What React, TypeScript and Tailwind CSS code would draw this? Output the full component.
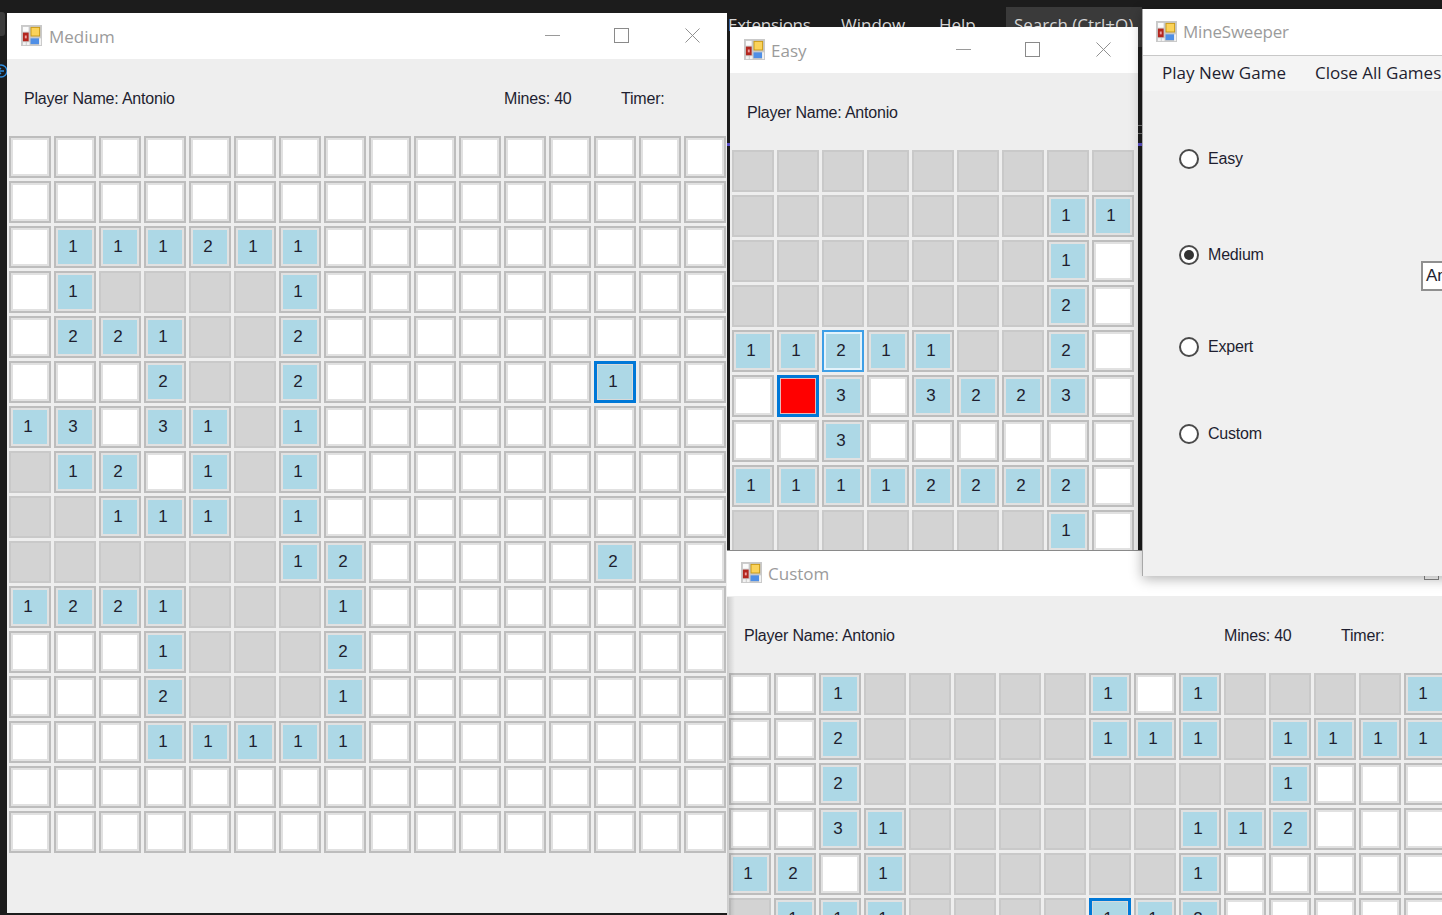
const MEDIUM = [
  "................",
  "................",
  ".111211.........",
  ".1xxxx1.........",
  ".221xx2.........",
  "...2xx2......F..",
  "13.31x1.........",
  "x12.1x1.........",
  "xx111x1.........",
  "xxxxxx12.....2..",
  "1221xxx1........",
  "...1xxx2........",
  "...2xxx1........",
  "...11111........",
  "................",
  "................",
];

const EASY = [
  "xxxxxxxxx",
  "xxxxxxx11",
  "xxxxxxx1.",
  "xxxxxxx2.",
  "11L11xx2.",
  ".R3.3223.",
  "..3......",
  "11112222.",
  "xxxxxxx1.",
];

const CUSTOM = [
  "..1xxxxx1.1xxxx1",
  "..2xxxxx111x1111",
  "..2xxxxxxxxx1...",
  "..31xxxxxx112...",
  "12.1xxxxxx1.....",
  "x111xxxxF12.....",
];

function Cell({ v }: { v: string }) {
  const digit = /[0-9]/.test(v) ? v : v === "F" ? "1" : v === "L" ? "2" : "";
  if (v === "x")
    return <div className="h-[42px] w-[42px] border-2 border-[#c9c9c9] bg-[#d3d3d3]" />;
  if (v === "R")
    return (
      <div className="h-[42px] w-[42px] border-[3px] border-[#0078d7] bg-[#ff0000] shadow-[inset_0_0_0_1px_#e8b8b8]" />
    );
  if (v === ".")
    return (
      <div className="h-[42px] w-[42px] border-2 border-[#bdbdbd] bg-white shadow-[inset_0_0_0_2px_#e1e1e1]" />
    );
  const shell =
    v === "F"
      ? "border-[3px] border-[#0078d7] shadow-[inset_0_0_0_1px_#d9d9d9]"
      : v === "L"
        ? "border-2 border-[#3f9fe6] shadow-[inset_0_0_0_2px_#e4f3fb]"
        : "border-2 border-[#bdbdbd] shadow-[inset_0_0_0_2px_#e1e1e1]";
  return (
    <div
      className={`flex h-[42px] w-[42px] items-center justify-center bg-[#add8e6] pr-[4px] pb-[1px] font-['Liberation_Sans',sans-serif] text-[17px] text-[#1e1e30] ${shell}`}
    >
      {digit}
    </div>
  );
}

function Board({ rows, gridClass }: { rows: string[]; gridClass: string }) {
  return (
    <div className={`grid shrink-0 gap-[3px] pl-[2px] ${gridClass}`}>
      {rows.flatMap((r, i) => r.split("").map((c, j) => <Cell key={`${i}-${j}`} v={c} />))}
    </div>
  );
}

function AppIcon() {
  return (
    <svg width="21" height="21" viewBox="0 0 22 22" className="mb-[1px] shrink-0">
      <rect x="0" y="0" width="22" height="22" fill="#c9c9c9" />
      <rect x="2" y="2" width="6" height="5" fill="#fbfbfb" />
      <rect x="2" y="8" width="6" height="9" fill="#b3261e" />
      <rect x="4" y="11" width="2" height="3" fill="#f0a0a0" />
      <rect x="2" y="18" width="3" height="3" fill="#f2f2f2" />
      <rect x="6" y="18" width="3" height="3" fill="#f2f2f2" />
      <rect x="10" y="2" width="10" height="10" fill="#c99a18" />
      <rect x="11" y="3" width="8" height="8" fill="#fbd35a" />
      <rect x="10" y="14" width="9" height="6" fill="#4f8fe6" />
      <rect x="19" y="14" width="2" height="7" fill="#f2f2f2" />
    </svg>
  );
}

function TitleButtons() {
  return (
    <div className="ml-auto flex h-full pb-[1px] text-[#8a8a8a]">
      <div className="flex w-[70px] items-center justify-center pl-[1px]">
        <div className="h-px w-[15px] bg-[#9a9a9a]" />
      </div>
      <div className="flex w-[70px] items-center justify-center pr-[2px]">
        <div className="h-[15px] w-[15px] border border-[#8a8a8a]" />
      </div>
      <div className="flex w-[70px] items-center justify-center pl-[1px]">
        <svg width="15" height="15" viewBox="0 0 16 16" fill="none" stroke="currentColor" strokeWidth="1">
          <path d="M0.5 0.5L15.5 15.5M15.5 0.5L0.5 15.5" />
        </svg>
      </div>
    </div>
  );
}

function TitleBar({ title, textClass }: { title: string; textClass: string }) {
  return (
    <div className="flex h-[46px] shrink-0 items-center bg-white pl-[14px]">
      <AppIcon />
      <span className={`pt-[1px] font-['Open_Sans',sans-serif] text-[17px] text-[#9b9b9b] ${textClass}`}>{title}</span>
      <TitleButtons />
    </div>
  );
}

function InfoRow({ mines }: { mines: boolean }) {
  return (
    <div className="flex h-[77px] shrink-0 items-center pt-[2px] pl-[17px] font-['Liberation_Sans',sans-serif] text-[16px] tracking-[-0.2px] text-[#1e1e30]">
      <span className="w-[480px] whitespace-nowrap">Player Name: Antonio</span>
      {mines && (
        <>
          <span className="w-[117px] whitespace-nowrap">Mines: 40</span>
          <span>Timer:</span>
        </>
      )}
    </div>
  );
}

function Radio({ label, checked, rowClass }: { label: string; checked?: boolean; rowClass: string }) {
  return (
    <div className={`flex h-[24px] items-center gap-[9px] ${rowClass}`}>
      <div className="flex h-[20px] w-[20px] items-center justify-center rounded-full border-2 border-[#4a4a4a] bg-white">
        {checked && <div className="h-[10px] w-[10px] rounded-full bg-[#333333]" />}
      </div>
      <span className="font-['Liberation_Sans',sans-serif] text-[16px] tracking-[-0.2px] text-[#1e1e30]">{label}</span>
    </div>
  );
}

export default function App() {
  return (
    <div className="relative h-[915px] w-[1442px] overflow-hidden bg-[#1c1c1c]">
      {/* IDE menu behind the windows */}
      <div className="flex h-[50px] items-start pl-[728px] font-['Open_Sans',sans-serif] text-[17px] text-[#d4d4d4]">
        <span className="mt-[12px] w-[113px] tracking-[-0.3px]">Extensions</span>
        <span className="mt-[12px] w-[98px]">Window</span>
        <span className="mt-[12px] w-[67px]">Help</span>
        <span className="mt-[7px] h-[40px] w-[136px] whitespace-nowrap bg-[#3a3a3a] pt-[5px] pl-[8px]">Search (Ctrl+Q)</span>
      </div>
      <div className="absolute top-[12px] left-0 h-[24px] w-[5px] rounded-r-[3px] bg-[#3c3c3c]" />
      <svg width="8" height="16" viewBox="0 0 8 16" fill="none" stroke="#2f8ee0" strokeWidth="1.3" className="absolute top-[63px] left-0">
        <circle cx="1" cy="8" r="6" />
        <path d="M4 8H-2M1 5L-2 8L1 11" />
      </svg>
      <div className="absolute top-[143px] left-[727px] h-[3px] w-[3px] bg-[#5b4fc9]" />
      <div className="absolute top-[143px] left-[1138px] h-[3px] w-[4px] bg-[#5b4fc9]" />
      <div className="absolute top-[125px] left-[1138px] h-px w-[4px] bg-[#777777]" />
      <div className="absolute top-[133px] left-[1138px] h-px w-[4px] bg-[#777777]" />

      {/* Medium */}
      <div className="absolute top-[13px] left-[7px] flex h-[900px] w-[720px] flex-col overflow-hidden bg-[#eeeeee]">
        <TitleBar title="Medium" textClass="ml-[7px]" />
        <InfoRow mines />
        <Board rows={MEDIUM} gridClass="grid-cols-[repeat(16,42px)]" />
      </div>

      {/* Easy */}
      <div className="absolute top-[27px] left-[730px] flex h-[523px] w-[408px] flex-col overflow-hidden bg-[#eeeeee]">
        <TitleBar title="Easy" textClass="ml-[6px]" />
        <InfoRow mines={false} />
        <Board rows={EASY} gridClass="grid-cols-[repeat(9,42px)]" />
      </div>

      {/* Custom */}
      <div className="absolute top-[550px] left-[727px] flex h-[400px] w-[810px] flex-col overflow-hidden border-t border-[#8a8a8a] bg-[#eeeeee]">
        <div className="-mt-px">
          <TitleBar title="Custom" textClass="ml-[6px]" />
        </div>
        <InfoRow mines />
        <Board rows={CUSTOM} gridClass="grid-cols-[repeat(16,42px)]" />
        <div className="pointer-events-none absolute top-[46px] bottom-0 left-0 w-[8px] bg-gradient-to-r from-black/15 to-transparent" />
      </div>

      {/* MineSweeper */}
      <div className="absolute top-[9px] left-[1142px] flex h-[567px] w-[400px] flex-col overflow-hidden border-l border-[#a8a8a8] bg-[#f0f0f0] shadow-[0_3px_12px_rgba(0,0,0,0.3)]">
        <div className="-ml-px flex h-[47px] shrink-0 items-center border-b border-[#c8c8c8] bg-white pl-[14px]">
          <AppIcon />
          <span className="ml-[6px] font-['Open_Sans',sans-serif] text-[17px] tracking-[-0.2px] text-[#9b9b9b]">MineSweeper</span>
        </div>
        <div className="-ml-px flex h-[35px] shrink-0 items-center bg-[#f4f4f4] pb-[1px] pl-[20px] font-['Open_Sans',sans-serif] text-[17px] text-[#1e1e30]">
          <span className="w-[153px] whitespace-nowrap">Play New Game</span>
          <span className="whitespace-nowrap">Close All Games</span>
        </div>
        <div className="flex">
          <div className="w-[278px] pl-[36px]">
            <Radio label="Easy" rowClass="mt-[56px]" />
            <Radio label="Medium" checked rowClass="mt-[72px]" />
            <Radio label="Expert" rowClass="mt-[68px]" />
            <Radio label="Custom" rowClass="mt-[63px]" />
          </div>
          <div className="pt-[170px]">
            <div className="h-[30px] w-[100px] border-2 border-[#8f8f8f] bg-white pl-[3px] font-['Liberation_Sans',sans-serif] text-[17px] leading-[26px] text-[#1e1e30]">
              Antonio
            </div>
          </div>
        </div>
      </div>
    </div>
  );
}
